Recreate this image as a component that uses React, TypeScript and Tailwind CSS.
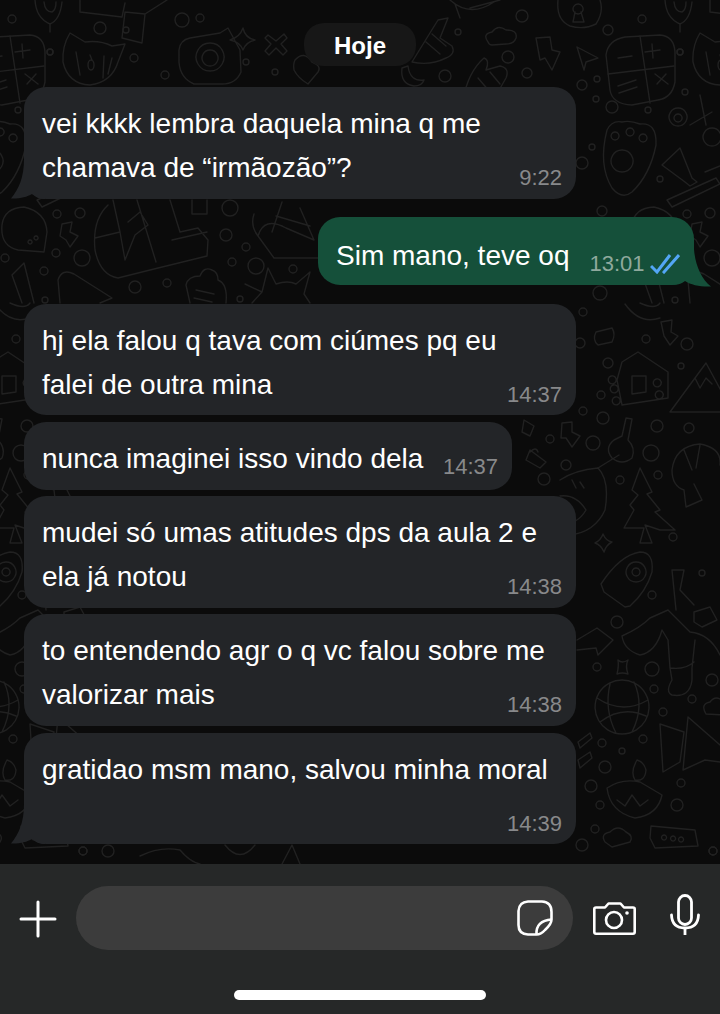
import type { ReactNode } from "react";

const dots: [number, number, number][] = [
  [522, 16, 6], [608, 30, 5], [642, 19, 4], [680, 52, 3], [458, 32, 3], [508, 57, 6], [445, 76, 6], [527, 73, 5],
  [582, 85, 5], [597, 79, 3], [596, 99, 3], [612, 107, 6], [648, 110, 3], [685, 92, 3], [592, 147, 3], [582, 163, 6],
  [660, 179, 3], [602, 211, 5], [600, 293, 7], [675, 300, 3], [583, 312, 4], [580, 343, 5], [646, 339, 4], [687, 344, 6],
  [608, 363, 5], [681, 366, 3], [601, 395, 4], [583, 411, 4], [603, 418, 6], [657, 426, 6], [689, 428, 5], [593, 443, 7],
  [651, 453, 8], [566, 465, 5], [658, 475, 4], [620, 480, 4], [673, 537, 4], [702, 573, 3], [652, 595, 4], [617, 622, 6],
  [652, 669, 7], [597, 667, 4], [654, 689, 4], [712, 680, 6], [692, 699, 4], [663, 712, 4], [602, 743, 4], [643, 739, 4],
  [622, 751, 3], [605, 767, 6], [591, 786, 6], [600, 805, 4], [677, 805, 6], [681, 783, 4], [595, 829, 4], [582, 845, 6],
  [713, 851, 4], [230, 208, 8], [226, 235, 6], [246, 247, 4], [256, 266, 8], [232, 262, 4], [293, 269, 4], [80, 213, 5],
  [57, 214, 4], [56, 253, 4], [82, 258, 8], [5, 258, 4], [44, 271, 4], [135, 287, 6], [167, 283, 4], [240, 299, 3],
  [550, 439, 4], [544, 479, 6], [83, 851, 4], [108, 851, 6], [100, 28, 6], [126, 30, 3], [182, 20, 7],
  [200, 18, 4], [50, 52, 3], [134, 58, 4], [246, 62, 3], [275, 72, 3], [165, 75, 4],
];

const doodlePaths = [
  // calculadora
  "M625 37 L660 35 Q674 36 675 52 L675 82 Q672 98 658 100 L632 105 Q612 104 610 90 L606 55 Q608 40 625 37 Z",
  "M640 36 L650 103 M608 74 L674 66 M645 52 L660 50 M652 44 L653 58 M618 58 L632 56 M655 74 L668 84 M666 74 L657 84 M618 86 L636 80 M619 93 L637 87",
  // gato / pote
  "M70 33 L85 42 Q100 40 112 46 L125 44 L118 62 Q112 82 90 85 Q68 84 63 62 Q62 46 70 33 Z M76 52 L80 75 M90 55 L92 60 M88 65 a3 5 0 1 0 6 0 a3 5 0 1 0 -6 0 M104 56 L103 78 M112 58 L108 74",
  // camera e estrela
  "M190 38 L220 33 L228 28 L240 50 L241 72 Q236 84 222 84 L194 84 Q180 78 179 62 L179 50 Q180 40 190 38 Z M210 43 a14 14 0 1 0 .1 0 Z M210 50 a8 8 0 1 0 .1 0 Z",
  "M243 28 Q245 38 255 40 Q246 42 243 50 Q240 42 230 40 Q240 37 243 28 Z",
  "M268 35 L276 41 L284 34 L287 38 L281 44 L287 51 L283 55 L276 48 L269 55 L265 51 L271 44 L265 38 Z",
  "M295 60 Q304 50 312 62 Q322 66 318 72 L308 84 Q298 78 294 70 Q293 64 295 60 Z",
  // mochilas do topo
  "M80 0 L80 12 L122 17 L125 3 M125 12 L145 14 L142 43 L122 38 L125 12 M145 14 L167 0",
  "M35 0 Q36 18 50 24 Q60 20 62 2 M50 24 L50 32 M44 2 Q45 12 52 12 Q56 10 56 2",
  "M450 0 Q470 18 494 2 M455 4 L460 18 M470 8 L500 0",
  // maos e lua
  "M412 62 L438 20 L448 18 L440 38 L452 46 Q456 54 446 58 Q430 66 412 62 Z M432 34 L446 46 M426 42 L440 54",
  "M402 68 Q400 84 414 86 Q422 86 424 80 Q410 82 408 66 Z",
  "M463 100 Q468 72 484 58 Q490 60 486 70 L500 66 Q510 68 506 78 L498 92 M478 78 L490 92 M490 72 L500 84",
  // nuvem, raio, cursor
  "M488 42 Q482 34 492 32 Q498 24 506 30 Q518 30 516 38 Q514 44 506 44 L492 45 Q489 45 488 42 Z",
  "M536 38 L550 37 L552 50 L560 52 L552 70 L545 58 L540 60 Z",
  "M577 47 L598 58 L586 62 L584 70 Z",
  // cadeado do topo
  "M558 0 Q556 20 570 26 Q584 30 596 24 Q604 12 600 0 M578 4 a5 5 0 1 0 .1 0 M575 12 L573 22 L584 22 L581 12",
  // pata
  "M607 130 Q598 165 612 188 Q622 200 632 192 Q650 175 656 145 Q657 122 640 124 Q630 120 622 122 Q612 120 607 130 Z M622 150 a11 11 0 1 0 .1 0 M615 132 a4 4 0 1 0 .1 0 M630 128 a4 4 0 1 0 .1 0 M643 134 a4 4 0 1 0 .1 0",
  // tesoura
  "M678 108 a9 9 0 1 0 .1 0 M678 114 a4 4 0 1 0 .1 0 M690 125 L712 112 M700 95 L706 125 M712 128 a9 9 0 1 0 .1 0",
  // tubo
  "M662 165 L680 148 L692 178 L697 182 L690 186 L685 182 Z",
  "M667 200 L716 178 L720 184 L672 207 Z M705 172 L720 166",
  // mouse e bota do meio
  "M108 205 Q92 220 95 250 Q100 275 118 278 L150 270 L207 256 L208 240 L198 228 L180 232 L170 200 M95 238 L120 232 L125 260 L135 235 L148 225 L140 212 L128 222 M120 232 L113 200 M137 200 L156 262 M172 240 L207 232",
  "M192 200 L192 214 L207 214 L207 200",
  // taco
  "M2 225 Q4 208 24 207 Q46 212 47 232 L44 252 L18 250 Q0 246 2 225 Z M36 236 a2 2 0 1 0 .1 0 M30 240 a2 2 0 1 0 .1 0",
  "M62 224 L72 222 L70 232 L78 236 L70 247 L66 240 L60 236 Z",
  // sapato
  "M254 214 Q250 226 258 236 L274 258 L320 258 M258 236 Q264 216 286 228 L314 240 L300 208 M272 232 L282 202 M276 216 L310 226",
  // sacola, gato
  "M190 303 L186 285 Q188 276 200 276 Q204 266 212 270 Q218 272 218 280 Q228 284 226 303 M196 290 L214 294 M194 298 L212 302",
  "M245 284 L262 292 L268 268 L276 284 Q288 280 296 284 L310 272 L304 294 M252 303 L262 292 M304 294 L310 303",
  "M60 303 L58 280 Q62 268 74 274 L112 298 L100 303",
  "M22 303 L12 275 L24 263 L34 303",
  // raio, bolha, casa, montanha
  "M661 322 L672 320 L671 332 L678 336 L670 345 L664 336 Z",
  "M596 332 L612 328 Q616 334 612 342 L598 345 Q592 340 596 332 Z",
  "M622 362 L638 352 L668 372 L668 398 L622 405 L617 380 Z M632 376 L646 376 L646 392 L632 394 Z M615 377 a4 4 0 1 0 .1 .1 M617 386 a4 4 0 1 0 .1 .1 M619 398 a4 4 0 1 0 .1 .1 M660 380 a4 4 0 1 0 .1 .1 M662 392 a4 4 0 1 0 .1 .1 M625 304 Q640 325 660 318 M640 303 Q655 310 660 303",
  "M670 412 L706 363 L725 398 M670 412 L720 412 M695 378 L700 388 L706 378 L712 384",
  // concha, chave, arvore
  "M672 470 Q675 446 700 444 Q722 448 720 465 M672 470 Q672 486 684 490 L686 507 L702 500 L694 484 M684 450 L692 470 M700 445 L696 468",
  "M626 418 L632 419 L628 440 Q636 448 632 458 Q622 466 612 458 Q604 448 614 440 L622 436 Z M619 455 L598 468",
  "M640 468 L652 492 L647 494 L660 510 L655 512 L675 530 L660 530 L645 525 L652 543 L640 543 L644 528 L632 528 L624 528 L634 510 L630 505 L638 495 L632 490 Z",
  // abacate e pintinho
  "M598 468 Q610 480 605 510 Q595 532 570 535 L560 530 M598 468 Q575 470 560 480 M572 480 L576 488 M580 482 L584 488",
  "M560 496 Q576 494 586 510 Q578 524 560 526",
  "M603 534 Q606 541 612 542 Q606 545 604 552 Q601 545 595 543 Q601 540 603 534 Z",
  "M562 423 L572 422 L572 432 L580 436 L572 447 L566 438 L561 438 Z",
  // abacate com circulos, luva
  "M601 584 Q620 555 640 552 Q654 552 652 572 Q646 592 630 606 L625 607 L604 592 Z M636 562 a10 10 0 1 0 .1 0 M636 568 a4 4 0 1 0 .1 0",
  "M622 636 Q640 628 650 618 L668 610 L690 632 Q710 634 720 655 M622 636 Q624 650 640 655 Q656 652 662 630 L668 640 L670 668 L672 680 Q665 692 672 695 Q690 698 692 680 L692 668 L695 640 M670 668 Q685 670 694 662",
  "M694 612 L710 607 L717 620 L702 627 L694 622 Z M672 570 L684 570 L680 590 L694 605 M672 570 L676 610",
  "M577 640 L597 628 L613 640 L598 655 L596 648 L577 650",
  "M618 660 Q622 664 628 660 Q625 666 628 674 Q622 672 617 674 Q619 666 618 660 Z",
  "M622 680 a27 27 0 1 0 .1 0 M597 698 Q622 715 648 700 M600 722 Q622 705 646 716 M610 684 Q604 710 616 733 M634 682 Q645 706 632 732",
  // barracas, velas e caixa
  "M660 724 L684 732 L680 762 L663 772 Z M688 717 L720 745 M688 717 L683 770 L705 760 L720 762",
  "M637 760 Q630 772 635 780 Q645 782 646 770 Q644 762 637 760 Z M607 788 Q622 778 640 782 L662 795 Q658 815 635 818 Q610 812 607 788 Z M617 800 L625 806 L632 795 L640 806 L648 800",
  "M651 826 L695 830 L698 846 L655 848 L650 838 Z M664 835 a2.5 2.5 0 1 0 .1 0 M673 836 a2.5 2.5 0 1 0 .1 0 M681 837 a2.5 2.5 0 1 0 .1 0",
  "M605 842 Q600 834 610 832 Q618 824 626 832 Q634 836 630 842 L612 847 Z",
  "M706 714 Q700 704 710 702 Q716 694 724 702 L724 715 Z",
  "M578 742 L590 733 L592 738 L580 748 Z M578 760 L590 752 L592 758 L580 768 Z",
  // chave e raio do meio
  "M524 420 L534 426 L530 436 L522 432 Z",
  "M530 450 L546 462 L540 468 L526 460 Z M530 452 Q536 446 538 452",
  "M140 856 Q160 846 180 850 Q190 862 200 864 M225 845 Q240 864 255 845 M282 864 L292 845 L300 864",
];

function Doodles() {
  return (
    <svg className="absolute inset-0" width="720" height="864" viewBox="0 0 720 864" fill="none" stroke="#212121" strokeWidth="1.4" strokeLinecap="round" strokeLinejoin="round">
      {[-630, 0, 630].map((dx) => (
        <g key={dx} transform={`translate(${dx} 0)`}>
          {doodlePaths.map((d, i) => (
            <path key={i} d={d} />
          ))}
          {dots.map(([cx, cy, r], i) => (
            <circle key={i} cx={cx} cy={cy} r={r} />
          ))}
        </g>
      ))}
    </svg>
  );
}

function TailLeft() {
  return (
    <svg className="absolute left-[-13px] bottom-0" width="34" height="40" viewBox="0 0 34 40">
      <path d="M13 0 C13 18 8 30 0 39.5 C8 40 16 38 21 35 C25 38 28 40 34 40 L34 0 Z" fill="#232528" />
    </svg>
  );
}

function TailRight() {
  return (
    <svg className="absolute right-[-17px] bottom-[-2px]" width="40" height="38" viewBox="0 0 40 38">
      <path d="M23 0 C24 15 30 30 40 37.5 C30 38 20 36 14 32 C10 35 6 36 0 36 L0 0 Z" fill="#15503a" />
    </svg>
  );
}

function Checks() {
  return (
    <svg width="30" height="20" viewBox="0 0 30 20" fill="none" stroke="#53a6f5" strokeWidth="3" className="relative shrink-0 ml-[5px] mb-[3px]">
      <path d="M1 12 L7 18 L20 1" />
      <path d="M13 17 L14 18 L29 1" />
    </svg>
  );
}

function Time({ children, green }: { children: ReactNode; green?: boolean }) {
  return <span className={`relative text-[22px] leading-[26px] whitespace-nowrap ${green ? "text-[#8fa99d]" : "text-[#88898b]"}`}>{children}</span>;
}

function LongBubble({ lines, time, cls, tail }: { lines: string[]; time: string; cls: string; tail?: boolean }) {
  return (
    <div className={`relative w-[552px] rounded-[22px] bg-[#232528] pl-[18px] pr-[14px] pt-[15px] flex flex-col ${cls}`}>
      {tail && <TailLeft />}
      <div className="relative min-h-[88px]">
        {lines.map((line) => (
          <p key={line} className="w-fit text-[28px] leading-[44px] text-white">{line}</p>
        ))}
      </div>
      <div className="relative self-end -mt-[25px]">
        <Time>{time}</Time>
      </div>
    </div>
  );
}

export default function App() {
  return (
    <div className="w-[720px] h-[1014px] flex flex-col overflow-hidden font-['Liberation_Sans',Arial,sans-serif]">
      <main className="relative h-[864px] shrink-0 bg-[#0b0b0b] overflow-hidden">
        <Doodles />
        <div className="relative flex flex-col items-start pl-[24px] pt-[23px]">
          <div className="self-center -ml-[24px] h-[43px] w-[112px] rounded-[20px] bg-[#171717] pt-[3px] flex items-center justify-center text-[24px] font-bold text-white">
            Hoje
          </div>
          <LongBubble cls="mt-[21px] h-[112px]" tail time="9:22" lines={["vei kkkk lembra daquela mina q me", "chamava de “irmãozão”?"]} />
          <div className="relative mt-[18px] ml-[294px] h-[68px] w-[376px] rounded-[22px] bg-[#15503a] pl-[18px] pr-[14px] flex items-end pb-[8px]">
            <TailRight />
            <span className="relative text-[28px] leading-[44px] text-white -mb-[1px] mr-[20px] whitespace-nowrap">Sim mano, teve oq</span>
            <Time green>13:01</Time>
            <Checks />
          </div>
          <LongBubble cls="mt-[19px] h-[111px]" time="14:37" lines={["hj ela falou q tava com ciúmes pq eu", "falei de outra mina"]} />
          <div className="mt-[7px] h-[68px] w-[488px] rounded-[22px] bg-[#232528] pl-[18px] pr-[14px] flex items-end justify-between pb-[10px]">
            <span className="text-[28px] leading-[44px] text-white -mb-[1px] whitespace-nowrap">nunca imaginei isso vindo dela</span>
            <Time>14:37</Time>
          </div>
          <LongBubble cls="mt-[6px] h-[112px]" time="14:38" lines={["mudei só umas atitudes dps da aula 2 e", "ela já notou"]} />
          <LongBubble cls="mt-[6px] h-[112px]" time="14:38" lines={["to entendendo agr o q vc falou sobre me", "valorizar mais"]} />
          <LongBubble cls="mt-[7px] h-[111px]" tail time="14:39" lines={["gratidao msm mano, salvou minha moral"]} />
        </div>
      </main>
      <footer className="h-[150px] bg-[#262828] flex flex-col">
        <div className="flex items-center pt-[22px]">
          <div className="w-[76px] flex justify-center">
            <svg width="38" height="38" viewBox="0 0 38 38" stroke="#fff" strokeWidth="3" strokeLinecap="round" className="mt-[2px]">
              <path d="M19 2 V36 M2 19 H36" />
            </svg>
          </div>
          <div className="w-[497px] h-[64px] rounded-[32px] bg-[#3c3c3c] flex items-center justify-end pr-[20px]">
            <svg width="36" height="36" viewBox="0 0 36 36" fill="none" stroke="#fff" strokeWidth="2.6" strokeLinejoin="round">
              <path d="M11 1.5 H25 Q34.5 2 34.5 12 V19.5 Q34.5 24 28 30 Q24 34.5 19.5 34.5 H11 Q1.5 34 1.5 25 V11 Q2 2 11 1.5 Z" />
              <path d="M19.5 34 C19 26 24 20 34.5 19.5" />
            </svg>
          </div>
          <div className="ml-[20px]">
            <svg width="43" height="33" viewBox="0 0 43 33" fill="none" stroke="#fff" strokeWidth="2.6" strokeLinejoin="round">
              <path d="M3 5.5 H12 L15.5 1.5 H27.5 L31 5.5 H40 Q41.7 5.5 41.7 7 V30 Q41.7 31.7 40 31.7 H3 Q1.3 31.7 1.3 30 V7 Q1.3 5.5 3 5.5 Z" />
              <circle cx="21" cy="18" r="8" />
              <circle cx="34" cy="11" r="1.8" fill="#fff" stroke="none" />
            </svg>
          </div>
          <div className="ml-[34px] -mt-[6px]">
            <svg width="30" height="42" viewBox="0 0 30 42" fill="none" stroke="#fff" strokeWidth="2.8" strokeLinecap="round">
              <rect x="8.5" y="1.5" width="13" height="29" rx="6.5" />
              <path d="M1.5 21 Q2 34 15 34 Q28 34 28.5 21" />
              <path d="M15 34 V41" strokeLinecap="butt" />
            </svg>
          </div>
        </div>
        <div className="mt-[40px] self-center w-[252px] h-[10px] rounded-full bg-white" />
      </footer>
    </div>
  );
}
